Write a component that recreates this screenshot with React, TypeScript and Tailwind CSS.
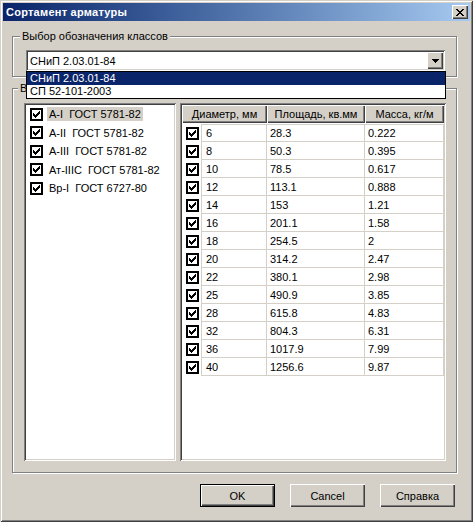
const raised = "shadow-[inset_1px_1px_0_#fff,inset_-1px_-1px_0_#404040,inset_-2px_-2px_0_#808080]";
const sunken = "shadow-[inset_1px_1px_0_#808080,inset_-1px_-1px_0_#fff,inset_2px_2px_0_#404040,inset_-2px_-2px_0_#d4d0c8]";
const etched = "border border-[#808080] shadow-[inset_1px_1px_0_#fff,1px_1px_0_#fff]";

const classes = ["А-I  ГОСТ 5781-82", "А-II  ГОСТ 5781-82", "А-III  ГОСТ 5781-82", "Ат-IIIC  ГОСТ 5781-82", "Вр-I  ГОСТ 6727-80"];

const rows: [string, string, string][] = [
  ["6", "28.3", "0.222"],
  ["8", "50.3", "0.395"],
  ["10", "78.5", "0.617"],
  ["12", "113.1", "0.888"],
  ["14", "153", "1.21"],
  ["16", "201.1", "1.58"],
  ["18", "254.5", "2"],
  ["20", "314.2", "2.47"],
  ["22", "380.1", "2.98"],
  ["25", "490.9", "3.85"],
  ["28", "615.8", "4.83"],
  ["32", "804.3", "6.31"],
  ["36", "1017.9", "7.99"],
  ["40", "1256.6", "9.87"],
];

// пиксельная галочка (столбцы x, начало y)
const tick: [number, number][] = [[3, 5], [4, 6], [5, 7], [6, 6], [7, 5], [8, 4], [9, 3]];

function CheckBox() {
  return (
    <svg width="13" height="13" viewBox="0 0 13 13" shapeRendering="crispEdges" className="shrink-0">
      <rect x="1" y="1" width="11" height="11" fill="#fff" stroke="#000" strokeWidth="2" />
      {tick.map(([x, y]) => (
        <rect key={x} x={x} y={y} width="1" height="3" fill="#000" />
      ))}
    </svg>
  );
}

function CloseGlyph() {
  const px: [number, number][] = [
    [0, 0], [1, 0], [6, 0], [7, 0],
    [1, 1], [2, 1], [5, 1], [6, 1],
    [2, 2], [3, 2], [4, 2], [5, 2],
    [3, 3], [4, 3],
    [2, 4], [3, 4], [4, 4], [5, 4],
    [1, 5], [2, 5], [5, 5], [6, 5],
    [0, 6], [1, 6], [6, 6], [7, 6],
  ];
  return (
    <svg width="8" height="7" viewBox="0 0 8 7" shapeRendering="crispEdges">
      {px.map(([x, y]) => (
        <rect key={`${x}-${y}`} x={x} y={y} width="1" height="1" fill="#000" />
      ))}
    </svg>
  );
}

function Button({ label, isDefault }: { label: string; isDefault?: boolean }) {
  return (
    <div className={isDefault ? "w-[75px] h-[23px] border border-black" : "w-[75px] h-[23px]"}>
      <div className={`w-full h-full flex items-center justify-center bg-[#d4d0c8] ${raised}`}>{label}</div>
    </div>
  );
}

export default function App() {
  return (
    <div className="relative w-[473px] h-[522px] overflow-hidden bg-[#d4d0c8] p-[3px] text-[11px] leading-[14px] text-black font-['Liberation_Sans',Arial,sans-serif] shadow-[inset_1px_1px_0_#d4d0c8,inset_-1px_-1px_0_#404040,inset_2px_2px_0_#fff,inset_-2px_-2px_0_#808080]">
      {/* заголовок окна */}
      <div className="h-[18px] flex items-center justify-between pl-[3px] pr-[2px] bg-linear-to-r from-[#0a246a] to-[#a6caf0]">
        <span className="text-white font-bold tracking-[0.25px]">Сортамент арматуры</span>
        <div className={`w-[16px] h-[14px] flex items-center justify-center bg-[#d4d0c8] ${raised}`}>
          <CloseGlyph />
        </div>
      </div>

      <div className="pl-[9px] pr-[13px]">
        {/* выбор норматива */}
        <div className={`mt-[15px] pl-[13px] pb-[5px] ${etched}`}>
          <div className="-mt-[8px] ml-[-6px] w-fit px-[2px] bg-[#d4d0c8]">Выбор обозначения классов</div>
          <div className={`mt-[7px] w-[419px] h-[21px] p-[2px] bg-white flex items-center ${sunken}`}>
            <span className="flex-1 pl-[2px]">СНиП 2.03.01-84</span>
            <div className={`w-[16px] h-[17px] flex items-center justify-center bg-[#d4d0c8] ${raised}`}>
              <svg width="7" height="4" viewBox="0 0 7 4" shapeRendering="crispEdges">
                <path d="M0 0h7v1h-1v1h-1v1h-1v1h-1v-1h-1v-1h-1v-1h-1z" fill="#000" />
              </svg>
            </div>
          </div>
        </div>

        {/* классы и диаметры */}
        <div className={`mt-[11px] pl-[11px] pr-[10px] pb-[11px] ${etched}`}>
          <div className="-mt-[8px] ml-[-6px] w-fit px-[2px] bg-[#d4d0c8]">Выбор арматуры</div>
          <div className="mt-[8px] flex gap-[4px] h-[358px]">
            <div className={`w-[152px] p-[2px] bg-white ${sunken}`}>
              {classes.map((c, i) => (
                <div key={c} className="h-[18.5px] flex items-center pl-[4px] gap-[4px]">
                  <CheckBox />
                  <span className={i === 0 ? "px-[2px] bg-[#d4d0c8] whitespace-pre" : "px-[2px] whitespace-pre"}>{c}</span>
                </div>
              ))}
            </div>

            <div className={`w-[266px] p-[2px] bg-white ${sunken}`}>
              <div className="flex h-[18px]">
                <div className={`w-[85px] flex items-center justify-center bg-[#d4d0c8] ${raised}`}>Диаметр, мм</div>
                <div className={`w-[98px] flex items-center justify-center bg-[#d4d0c8] ${raised}`}>Площадь, кв.мм</div>
                <div className={`w-[79px] flex items-center justify-center bg-[#d4d0c8] ${raised}`}>Масса, кг/м</div>
              </div>
              <div className="mt-[1px]">
                {rows.map(([d, a, m], i) => (
                  <div key={d} className="flex h-[18px]">
                    <div className="w-[19px] flex items-center pl-[4px]">
                      <CheckBox />
                    </div>
                    <div className={`w-[66px] flex items-center pl-[4px] border-l border-r border-b border-[#d4d0c8] ${i === 0 ? "border-t" : ""}`}>{d}</div>
                    <div className={`w-[98px] flex items-center pl-[3px] border-r border-b border-[#d4d0c8] ${i === 0 ? "border-t" : ""}`}>{a}</div>
                    <div className={`w-[79px] flex items-center pl-[3px] border-r border-b border-[#d4d0c8] ${i === 0 ? "border-t" : ""}`}>{m}</div>
                  </div>
                ))}
              </div>
            </div>
          </div>
        </div>

        <div className="mt-[11px] mr-[2px] flex justify-end gap-[15px]">
          <Button label="OK" isDefault />
          <Button label="Cancel" />
          <Button label="Справка" />
        </div>
      </div>

      {/* раскрытый список */}
      <div className="absolute left-[26px] top-[71px] w-[420px] border border-black bg-white">
        <div className="h-[13px] leading-[13px] pl-[3px] bg-[#0a246a] text-white">СНиП 2.03.01-84</div>
        <div className="h-[13px] leading-[13px] pl-[3px]">СП 52-101-2003</div>
      </div>
    </div>
  );
}
